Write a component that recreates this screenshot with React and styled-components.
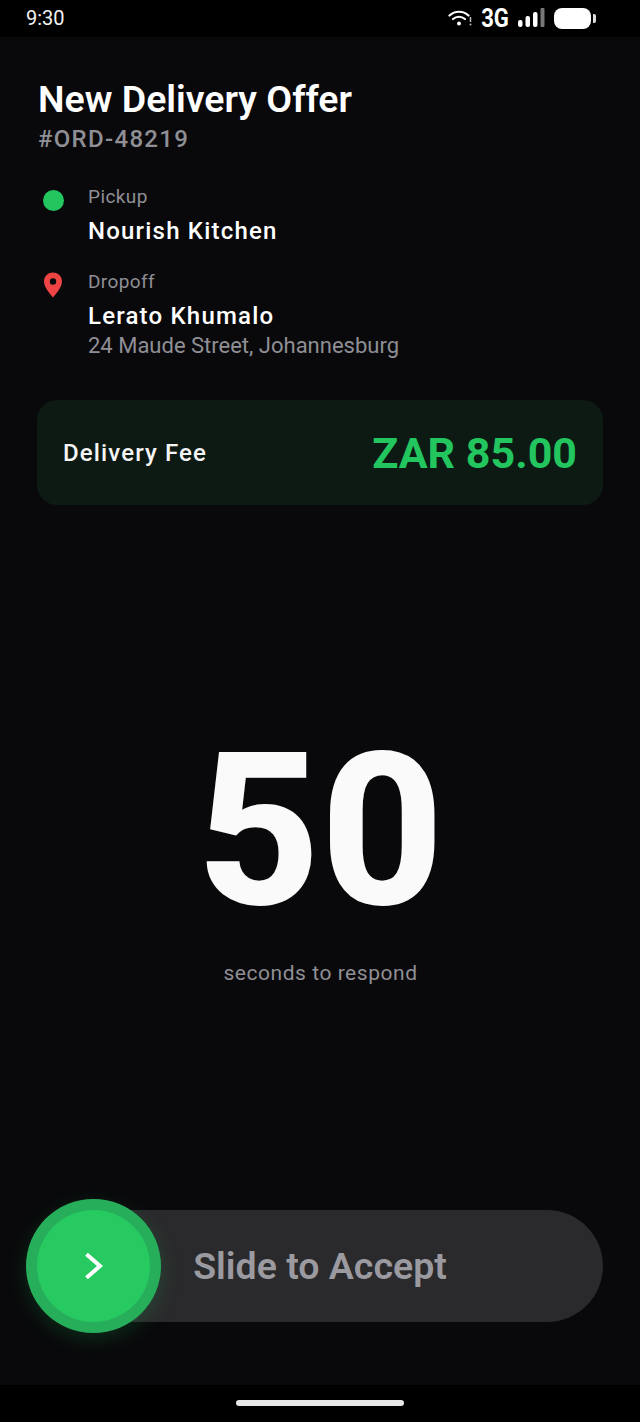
import React from "react";
import styled, { createGlobalStyle } from "styled-components";

const Global = createGlobalStyle`
  html, body { margin: 0; padding: 0; background: #000; }
  body { font-family: Roboto, "Liberation Sans", sans-serif; }
  * { box-sizing: border-box; }
`;

const Wifi = () => (
  <svg width="24" height="18" viewBox="0 0 24 18" fill="none">
    <path d="M1.5 6.5C7 1.5 15 1.5 20.5 6.5" stroke="#fff" strokeWidth="2.2" strokeLinecap="round" />
    <path d="M5 10C8.500 7 13.500 7 17 10" stroke="#fff" strokeWidth="2.200" strokeLinecap="round" />
    <circle cx="11" cy="14.500" r="2" fill="#fff" />
    <path d="M22.500 8v5" stroke="#bbb" strokeWidth="1.500" />
    <circle cx="22.500" cy="15.500" r="1" fill="#bbb" />
  </svg>
);

const Signal = () => (
  <svg width="27" height="20" viewBox="0 0 27 20">
    <rect x="0" y="12" width="4.500" height="7" rx="2" fill="#fff" />
    <rect x="7.500" y="8" width="4.500" height="11" rx="2" fill="#fff" />
    <rect x="15" y="4" width="4.500" height="15" rx="2" fill="#fff" />
    <rect x="22.500" y="0" width="4" height="19" rx="1" fill="#777" />
  </svg>
);

const Pin = () => (
  <svg width="20" height="26" viewBox="0 0 20 26">
    <path d="M10 0.500C4.700 0.500 1 4.600 1 9.500C1 15 6.500 21 10 25.500C13.500 21 19 15 19 9.500C19 4.600 15.300 0.500 10 0.500Z" fill="#ef4444" />
    <circle cx="10" cy="9.500" r="3.200" fill="#09090b" />
  </svg>
);

const Chevron = () => (
  <svg width="20" height="28" viewBox="0 0 20 28" fill="none">
    <path d="M4 3.500L16 14L4 24.500" stroke="#fff" strokeWidth="4" strokeLinecap="square" />
  </svg>
);

export default function App() {
  return (
    <Screen>
      <Global />
      <StatusBar>
        <Clock>9:30</Clock>
        <StatusIcons>
          <Wifi />
          <Network>3G</Network>
          <Signal />
          <Battery>
            <BatteryBody />
            <BatteryCap />
          </Battery>
        </StatusIcons>
      </StatusBar>

      <Main>
        <Title>New Delivery Offer</Title>
        <OrderId>#ORD-48219</OrderId>

        <Stops>
          <Stop>
            <StopIcon $top={6}><GreenDot /></StopIcon>
            <StopText>
              <StopLabel>Pickup</StopLabel>
              <StopName>Nourish Kitchen</StopName>
            </StopText>
          </Stop>
          <Stop>
            <StopIcon $top={3}><Pin /></StopIcon>
            <StopText>
              <StopLabel>Dropoff</StopLabel>
              <StopName>Lerato Khumalo</StopName>
              <StopAddress>24 Maude Street, Johannesburg</StopAddress>
            </StopText>
          </Stop>
        </Stops>

        <FeeCard>
          <FeeLabel>Delivery Fee</FeeLabel>
          <FeeAmount>ZAR 85.00</FeeAmount>
        </FeeCard>

        <Countdown>
          <Seconds>50</Seconds>
          <SecondsLabel>seconds to respond</SecondsLabel>
        </Countdown>

        <Slider>
          <SliderThumb><Chevron /></SliderThumb>
          <SliderText>Slide to Accept</SliderText>
        </Slider>
      </Main>

      <NavBar>
        <HomeIndicator />
      </NavBar>
    </Screen>
  );
}

const Screen = styled.div`
  width: 640px;
  height: 1422px;
  display: flex;
  flex-direction: column;
  overflow: hidden;
  background: #09090b;
`;

const StatusBar = styled.div`
  height: 37px;
  flex: none;
  background: #000;
  display: flex;
  align-items: center;
  justify-content: space-between;
  padding: 0 44px 1px 26px;
`;

const Clock = styled.span`
  font-size: 20px;
  color: #f2f2f2;
`;

const StatusIcons = styled.div`
  display: flex;
  align-items: center;
`;

const Network = styled.span`
  font-size: 26px;
  font-weight: 700;
  color: #fff;
  margin: 0 9px;
  width: 28px;
  display: flex;
  justify-content: center;
  transform: scaleX(0.85);
`;

const Battery = styled.div`
  display: flex;
  align-items: center;
  gap: 2px;
  margin-left: 9px;
`;

const BatteryBody = styled.div`
  width: 37px;
  height: 21px;
  border-radius: 8px;
  background: #fff;
`;

const BatteryCap = styled.div`
  width: 3px;
  height: 9px;
  border-radius: 0 2px 2px 0;
  background: #ddd;
`;

const Main = styled.div`
  flex: 1;
  display: flex;
  flex-direction: column;
  padding: 40px 37px 0 38px;
`;

const Title = styled.h1`
  margin: 0;
  font-size: 37.500px;
  line-height: 44px;
  font-weight: 600;
  color: #fff;
`;

const OrderId = styled.div`
  font-size: 24px;
  line-height: 37px;
  font-weight: 500;
  letter-spacing: 1.300px;
  color: #8f8f95;
`;

const Stops = styled.div`
  display: flex;
  flex-direction: column;
  gap: 20px;
  margin-top: 26px;
`;

const Stop = styled.div`
  display: flex;
  align-items: flex-start;
`;

const StopIcon = styled.div`
  width: 30px;
  margin-right: 20px;
  padding-top: ${(p) => p.$top}px;
  display: flex;
  justify-content: center;
`;

const GreenDot = styled.div`
  width: 21px;
  height: 21px;
  border-radius: 50%;
  background: #22c55e;
`;

const StopText = styled.div`
  display: flex;
  flex-direction: column;
`;

const StopLabel = styled.div`
  font-size: 19px;
  line-height: 26px;
  letter-spacing: 0.400px;
  color: #8f8f95;
`;

const StopName = styled.div`
  margin-top: 3px;
  font-size: 24px;
  line-height: 36px;
  font-weight: 500;
  letter-spacing: 1.200px;
  color: #fff;
`;

const StopAddress = styled.div`
  font-size: 22px;
  line-height: 24px;
  color: #8f8f95;
`;

const FeeCard = styled.div`
  margin-top: 42px;
  height: 105px;
  margin-left: -1px;
  border-radius: 20px;
  background: #0d1a14;
  display: flex;
  align-items: center;
  justify-content: space-between;
  padding: 0 26px;
`;

const FeeLabel = styled.span`
  font-size: 24px;
  font-weight: 500;
  letter-spacing: 1.130px;
  color: #f5f5f5;
`;

const FeeAmount = styled.span`
  font-size: 43px;
  font-weight: 700;
  color: #22c55e;
`;

const Countdown = styled.div`
  flex: 1;
  display: flex;
  flex-direction: column;
  align-items: center;
  padding-top: 217px;
`;

const Seconds = styled.div`
  font-size: 214px;
  line-height: 218px;
  font-weight: 800;
  color: #fafafa;
`;

const SecondsLabel = styled.div`
  margin-top: 19px;
  font-size: 21px;
  line-height: 28px;
  letter-spacing: 0.540px;
  color: #8f8f95;
`;

const Slider = styled.div`
  position: relative;
  height: 112px;
  margin: 0 0 63px -1px;
  border-radius: 56px;
  background: #2a2a2c;
  display: flex;
  align-items: center;
  justify-content: center;
`;

const SliderThumb = styled.div`
  position: absolute;
  left: -11px;
  top: -11px;
  width: 135px;
  height: 134px;
  border-radius: 50%;
  background: #27c961;
  border: 11px solid #27ae5b;
  box-shadow: 0 6px 20px rgba(34, 197, 94, 0.18);
  display: flex;
  align-items: center;
  justify-content: center;
`;

const SliderText = styled.span`
  font-size: 37.500px;
  font-weight: 600;
  color: #9a9aa0;
`;

const NavBar = styled.div`
  height: 37px;
  flex: none;
  background: #000;
  display: flex;
  justify-content: center;
  padding-top: 15px;
`;

const HomeIndicator = styled.div`
  width: 168px;
  height: 6px;
  border-radius: 3px;
  background: #e8e8e8;
`;
